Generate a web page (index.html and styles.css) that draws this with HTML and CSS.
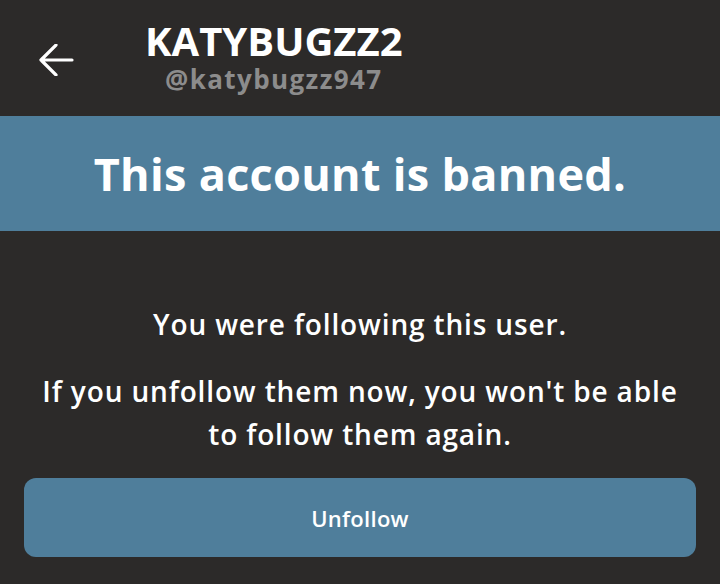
FILE: index.html
```html
<!DOCTYPE html>
<html>
<head>
<meta charset="utf-8">
<link rel="stylesheet" href="styles.css">
</head>
<body>
<div class="page">
  <header class="header">
    <button class="back" aria-label="Back">
      <svg width="36" height="32" viewBox="0 0 36 32"><path d="M34 16H3M18 1L3 16l15 15" fill="none" stroke="#fff" stroke-width="3.2" stroke-linecap="round" stroke-linejoin="round"/></svg>
    </button>
    <div class="names">
      <div class="display">KATYBUGZZ2</div>
      <div class="handle">@katybugzz947</div>
    </div>
  </header>
  <div class="banner">This account is banned.</div>
  <section class="body">
    <p class="line first">You were following this user.</p>
    <p class="line">If you unfollow them now, you won't be able<br>to follow them again.</p>
    <button class="unfollow">Unfollow</button>
  </section>
</div>
</body>
</html>
```
FILE: styles.css
```css
html, body {
  margin: 0;
  padding: 0;
  background: #2c2a29;
}
.page {
  width: 720px;
  height: 584px;
  font-family: "Open Sans", sans-serif;
  color: #fff;
  overflow: hidden;
}
.header {
  height: 116px;
  display: flex;
  align-items: flex-start;
}
.back {
  background: none;
  border: 0;
  padding: 0;
  margin: 44px 0 0 38px;
  width: 36px;
  height: 32px;
}
.back svg {
  display: block;
}
.names {
  margin-left: 71px;
  margin-top: 17px;
  display: flex;
  flex-direction: column;
  align-items: center;
}
.display {
  font-size: 40px;
  font-weight: 700;
  line-height: 47px;
}
.handle {
  font-size: 26px;
  font-weight: 700;
  letter-spacing: 1.4px;
  color: #8c8c8c;
  line-height: 30px;
}
.banner {
  height: 115px;
  background: #4f7e9b;
  display: flex;
  align-items: center;
  justify-content: center;
  font-size: 45px;
  font-weight: 700;
  letter-spacing: 0.3px;
}
.body {
  padding: 72px 24px 0;
  display: flex;
  flex-direction: column;
  align-items: center;
}
.line {
  margin: 0;
  font-size: 28px;
  font-weight: 600;
  letter-spacing: 0.85px;
  line-height: 43px;
  text-align: center;
}
.first {
  margin-bottom: 24px;
}
.unfollow {
  margin-top: 22px;
  width: 672px;
  height: 79px;
  border: 0;
  border-radius: 12px;
  background: #4f7e9b;
  color: #fff;
  font-family: inherit;
  font-size: 22px;
  font-weight: 600;
  letter-spacing: 0.3px;
}
```
